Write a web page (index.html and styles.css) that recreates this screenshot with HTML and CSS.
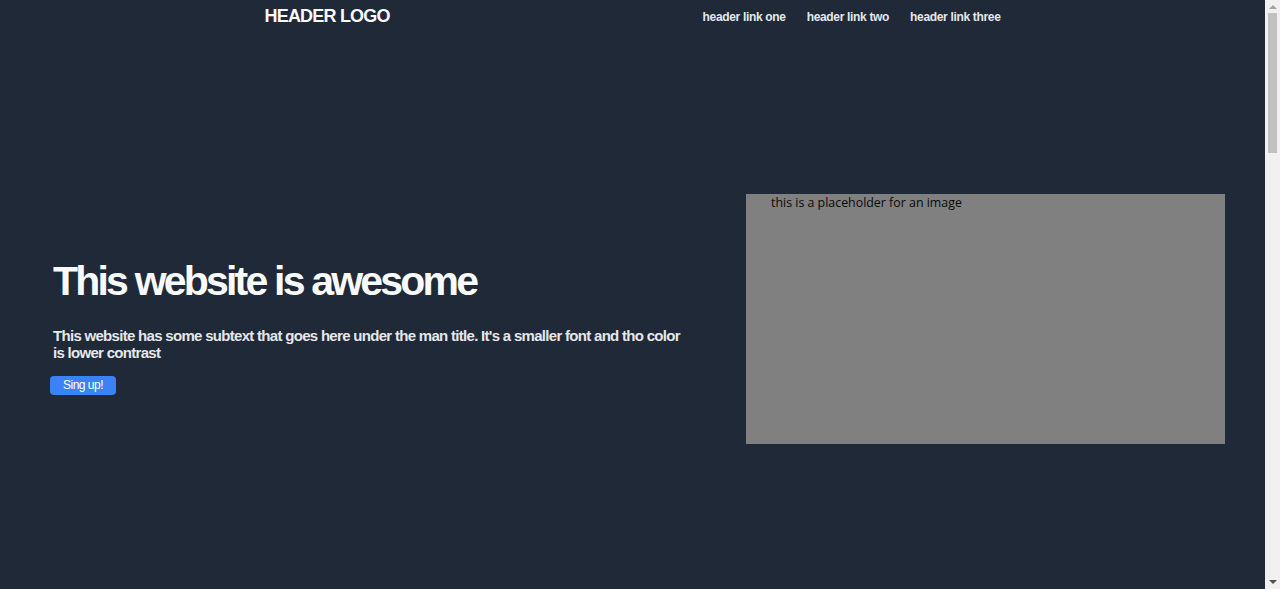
FILE: index.html
```html
<!DOCTYPE html>
<html lang="en">
<head>
<meta charset="utf-8">
<title>Header Logo</title>
<link rel="stylesheet" href="styles.css">
</head>
<body>
<header class="site-header">
  <div class="header-inner">
    <div class="logo">HEADER LOGO</div>
    <nav class="nav">
      <a href="#" class="nav-link">header link one</a>
      <a href="#" class="nav-link">header link two</a>
      <a href="#" class="nav-link">header link three</a>
    </nav>
  </div>
</header>
<main>
  <section class="hero">
    <div class="hero-text">
      <h1 class="hero-title">This website is awesome</h1>
      <p class="hero-sub">This website has some subtext that goes here under the man title. It's a smaller font and tho color is lower contrast</p>
      <a href="#" class="btn">Sing up!</a>
    </div>
    <div class="hero-image">this is a placeholder for an image</div>
  </section>
</main>
<div class="scrollbar" aria-hidden="true">
  <div class="sb-arrow sb-up"></div>
  <div class="sb-thumb"></div>
  <div class="sb-arrow sb-down"></div>
</div>
</body>
</html>
```

FILE: styles.css
```css
html, body {
  margin: 0;
  padding: 0;
}
body {
  background: #1f2937;
  color: #f9fafb;
  font-family: "Liberation Sans", Arial, sans-serif;
  padding-right: 15px;
  min-height: 100vh;
  box-sizing: border-box;
}
.site-header {
  display: flex;
  justify-content: center;
  height: 33px;
}
.header-inner {
  width: 736px;
  display: flex;
  justify-content: space-between;
  align-items: center;
}
.logo {
  font-weight: bold;
  font-size: 18px;
  letter-spacing: -0.8px;
  color: #f9fafb;
}
.nav {
  display: flex;
  gap: 21px;
}
.nav-link {
  color: #e5e7eb;
  text-decoration: none;
  font-weight: bold;
  font-size: 12px;
  letter-spacing: -0.33px;
}
.hero {
  display: flex;
  align-items: flex-start;
  gap: 46px;
  padding: 161px 40px 0 50px;
}
.hero-text {
  flex: 1;
  padding-left: 3px;
  margin-top: 63px;
}
.hero-title {
  margin: 0 0 21px;
  font-size: 41px;
  font-weight: bold;
  letter-spacing: -2.8px;
  line-height: 49px;
  color: #f9fafb;
}
.hero-sub {
  margin: 0 0 14px;
  max-width: 636px;
  font-size: 15px;
  font-weight: bold;
  letter-spacing: -0.7px;
  line-height: 17px;
  color: #e5e7eb;
}
.btn {
  display: inline-block;
  margin-left: -3px;
  padding: 2px 13px;
  background: #3b82f6;
  color: #fff;
  border-radius: 4px;
  font-size: 12px;
  letter-spacing: -0.5px;
  line-height: 15px;
  text-decoration: none;
}
.hero-image {
  width: 479px;
  height: 250px;
  flex: none;
  box-sizing: border-box;
  background: #808080;
  color: #0a0a0a;
  font-family: "Open Sans", sans-serif;
  font-size: 12.4px;
  padding: 0 0 0 25px;
}
.scrollbar {
  position: fixed;
  top: 0;
  right: 0;
  width: 15px;
  height: 100vh;
  background: #f1f1f1;
  display: flex;
  flex-direction: column;
  align-items: center;
}
.sb-arrow {
  width: 0;
  height: 0;
  border-left: 4px solid transparent;
  border-right: 4px solid transparent;
}
.sb-up {
  margin-top: 5px;
  border-bottom: 4px solid #a3a3a3;
}
.sb-thumb {
  margin-top: 4px;
  width: 9px;
  height: 140px;
  background: #c1c1c1;
}
.sb-down {
  margin-top: auto;
  margin-bottom: 5px;
  border-top: 4px solid #505050;
}
```
